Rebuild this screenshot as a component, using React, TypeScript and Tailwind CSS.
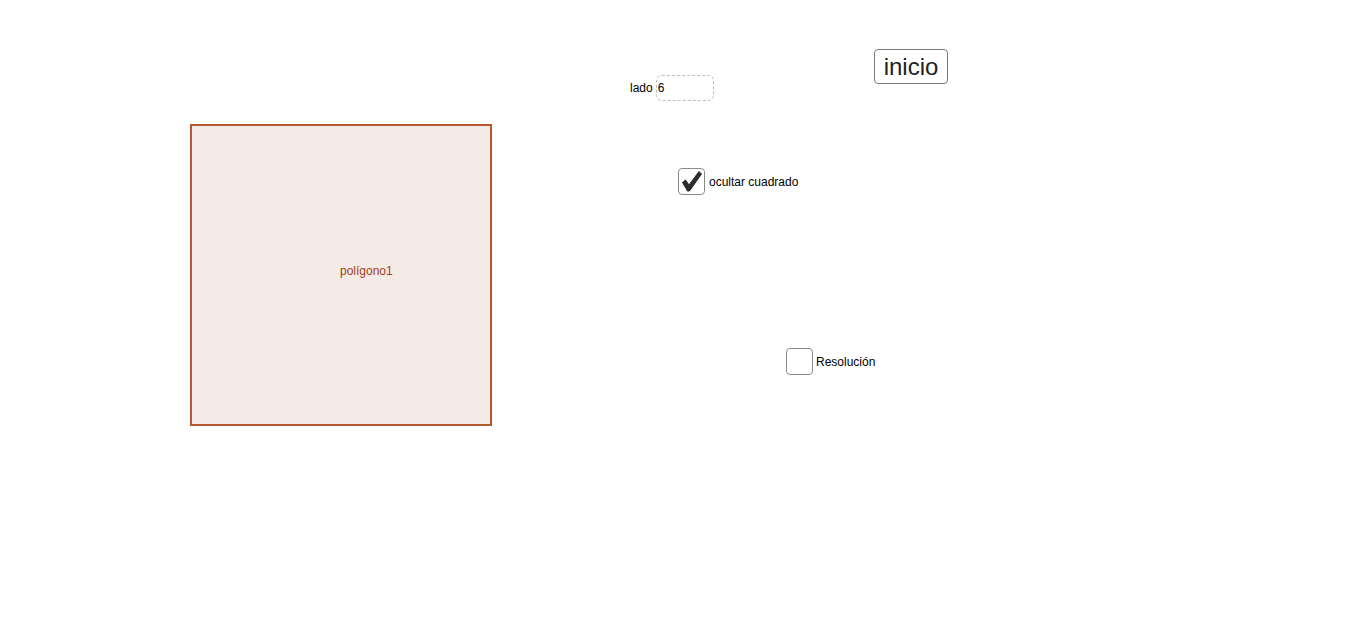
import { useState } from "react";

const font = { fontFamily: '"Liberation Sans", Arial, sans-serif' };

const CheckBox = ({ checked, onToggle }: { checked: boolean; onToggle: () => void }) => (
  <button
    onClick={onToggle}
    className="w-[27px] h-[27px] rounded-[4px] border border-[#8a8a8a] bg-white flex items-center justify-center p-0"
  >
    {checked && (
      <svg width="23" height="23" viewBox="0 0 23 23">
        <path
          d="M2.5 12.5 L5.5 10 L9 15 L19 1.5 L21.5 4 L9.5 21 L7.5 21 Z"
          fill="#2b2b2b"
          stroke="#2b2b2b"
          strokeWidth="1"
          strokeLinejoin="round"
        />
      </svg>
    )}
  </button>
);

const App = () => {
  const [lado, setLado] = useState("6");
  const [ocultar, setOcultar] = useState(true);
  const [resolucion, setResolucion] = useState(false);

  return (
    <div className="relative w-full h-[631px] bg-white overflow-hidden text-black" style={font}>
      {/* polígono */}
      <div className="absolute left-[190px] top-[124px] w-[302px] h-[302px] border-2 border-[#b5582d] bg-[#f4ebe6]">
        <span className="absolute left-[148px] top-[136px] text-[12px] text-[#9f401a]">polígono1</span>
      </div>

      {/* lado */}
      <div className="absolute left-[630px] top-[75px] flex items-center gap-[3px]">
        <span className="text-[12px]">lado</span>
        <input
          value={lado}
          onChange={(e) => setLado(e.target.value)}
          className="w-[58px] h-[26px] rounded-[6px] border border-dashed border-[#bdbdbd] px-[1px] text-[12px] outline-none bg-white"
        />
      </div>

      {/* inicio */}
      <button className="absolute left-[874px] top-[49px] w-[74px] h-[35px] rounded-[4px] border border-[#7a7a7a] bg-white text-[24px] leading-none text-[#222] flex items-center justify-center">
        inicio
      </button>

      {/* ocultar cuadrado */}
      <div className="absolute left-[678px] top-[168px] flex items-center gap-[4px]">
        <CheckBox checked={ocultar} onToggle={() => setOcultar(!ocultar)} />
        <span className="text-[12px]">ocultar cuadrado</span>
      </div>

      {/* Resolución */}
      <div className="absolute left-[786px] top-[348px] flex items-center gap-[3px]">
        <CheckBox checked={resolucion} onToggle={() => setResolucion(!resolucion)} />
        <span className="text-[12px]">Resolución</span>
      </div>
    </div>
  );
};

export default App;
